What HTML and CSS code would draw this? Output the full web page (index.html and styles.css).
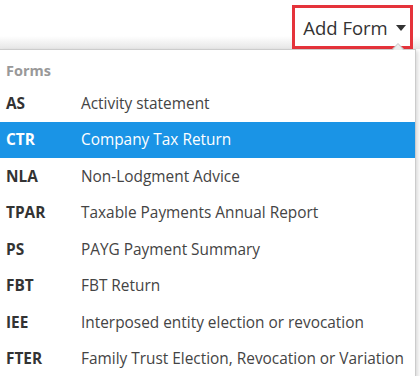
FILE: index.html
```html
<!DOCTYPE html>
<html lang="en">

<head>
    <title>Add Form</title>

    <link rel="stylesheet" href="styles.css">
</head>

<body>
    <header class="toolbar">
        <button class="add-form">Add Form <span class="caret"></span></button>
    </header>
    <ul class="menu">
        <li class="menu-header">Forms</li>
        <li class="menu-item"><span class="code">AS</span><span class="name">Activity statement</span></li>
        <li class="menu-item active"><span class="code">CTR</span><span class="name">Company Tax Return</span></li>
        <li class="menu-item"><span class="code">NLA</span><span class="name">Non-Lodgment Advice</span></li>
        <li class="menu-item"><span class="code">TPAR</span><span class="name">Taxable Payments Annual Report</span></li>
        <li class="menu-item"><span class="code">PS</span><span class="name">PAYG Payment Summary</span></li>
        <li class="menu-item"><span class="code">FBT</span><span class="name">FBT Return</span></li>
        <li class="menu-item"><span class="code">IEE</span><span class="name">Interposed entity election or revocation</span></li>
        <li class="menu-item"><span class="code">FTER</span><span class="name">Family Trust Election, Revocation or Variation</span></li>
    </ul>
</body>

</html>
```

FILE: styles.css
```css
* {
    padding: 0;
    margin: 0;
    box-sizing: border-box;
    font-family: "Open Sans", Arial, sans-serif;
}

body {
    width: 420px;
    height: 376px;
    overflow: hidden;
    background-color: #fff;
}

.toolbar {
    height: 49px;
    display: flex;
    justify-content: flex-end;
    align-items: flex-start;
    padding: 5px 7px 0 0;
    background: linear-gradient(to bottom, #fff 0px, #fff 36px, #e6e6e6 49px);
}

.add-form {
    width: 121px;
    height: 44px;
    border: 3px solid #e5333b;
    background: #fff;
    color: #333;
    font-size: 18.5px;
    display: flex;
    align-items: center;
    justify-content: center;
    gap: 8px;
    padding-left: 4px;
    cursor: pointer;
}

.caret {
    width: 0;
    height: 0;
    border-left: 5px solid transparent;
    border-right: 5px solid transparent;
    border-top: 6px solid #333;
    margin-top: 2px;
}

.menu {
    position: relative;
    list-style: none;
    width: 416px;
    border: 1px solid #ccc;
    border-left: none;
    background: #fff;
    box-shadow: 2px 2px 4px rgba(0, 0, 0, 0.15);
}

.menu::before {
    content: "";
    position: absolute;
    top: -7px;
    right: 11px;
    border-left: 6px solid transparent;
    border-right: 6px solid transparent;
    border-bottom: 6px solid #ccc;
}

.menu::after {
    content: "";
    position: absolute;
    top: -6px;
    right: 12px;
    border-left: 5px solid transparent;
    border-right: 5px solid transparent;
    border-bottom: 6px solid #eee;
}

.menu-header {
    height: 35px;
    padding: 11px 0 0 6px;
    font-size: 14.5px;
    font-weight: bold;
    color: #999;
}

.menu-item {
    display: flex;
    align-items: center;
    height: 36.5px;
    font-size: 15.4px;
    color: #444;
}

.code {
    flex: 0 0 81px;
    padding-left: 6px;
    font-weight: bold;
    color: #333;
}

.menu-item.active {
    background-color: #1a94e6;
    color: #fff;
}

.menu-item.active .code {
    color: #fff;
}
```
